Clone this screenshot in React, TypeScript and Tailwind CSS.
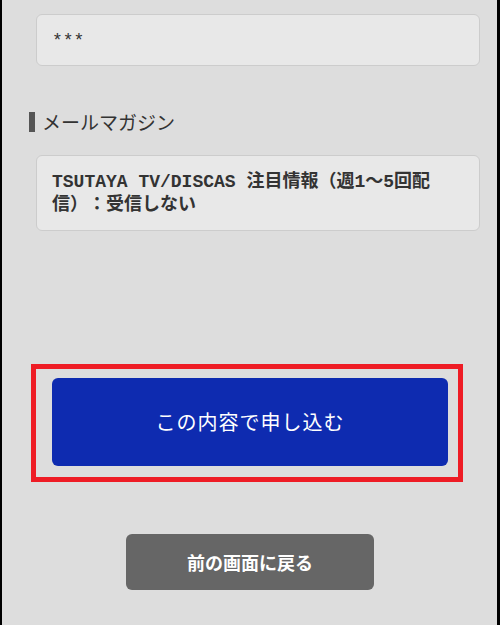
import React from "react";

const sans = { fontFamily: '"Noto Sans CJK JP", "Noto Sans", sans-serif' };

export default function App() {
  return (
    <div
      className="w-[500px] h-[625px] overflow-hidden bg-[#dddddd] border-l-2 border-r-[3px] border-black flex flex-col font-['Noto_Sans_CJK_JP',sans-serif]"
    >
      {/* パスワード */}
      <div className="mt-[14px] ml-[34px] w-[444px] h-[52px] rounded-md border border-[#cccccc] bg-[#e8e8e8] flex items-center pl-[15px] pt-[2px] font-['Liberation_Mono','Noto_Sans_CJK_JP',monospace] text-[18px] text-[#333333]">
        ***
      </div>

      {/* メールマガジン */}
      <div className="mt-[46px] ml-[27px] flex items-center gap-[7px]">
        <div className="w-[6px] h-[20px] bg-[#555555]" />
        <div className="text-[19px] leading-[20px] text-[#333333]">メールマガジン</div>
      </div>

      <div className="mt-[23px] ml-[34px] w-[444px] h-[76px] rounded-md border border-[#cccccc] bg-[#e8e8e8] px-[15px] pt-[15px] font-['Liberation_Mono','Noto_Sans_CJK_JP',monospace] font-bold text-[18px] leading-[22.5px] text-[#333333] [text-spacing-trim:space-all]">
        TSUTAYA TV/DISCAS 注目情報（週1〜5回配信）：受信しない
      </div>

      {/* 申し込みボタン */}
      <div className="mt-[133px] ml-[29px] w-[432px] h-[118px] border-[5px] border-[#ee1c25] pt-[9px] pl-[16px]">
        <button
          className="w-[396px] h-[88px] rounded-md bg-[#0e2bb0] text-white text-[20px] tracking-[1px] flex items-center justify-center"
          style={sans}
        >
          この内容で申し込む
        </button>
      </div>

      <button
        className="mt-[52px] ml-[124px] w-[248px] h-[56px] rounded-md bg-[#666666] text-white text-[18px] font-bold flex items-center justify-center"
        style={sans}
      >
        前の画面に戻る
      </button>
    </div>
  );
}
